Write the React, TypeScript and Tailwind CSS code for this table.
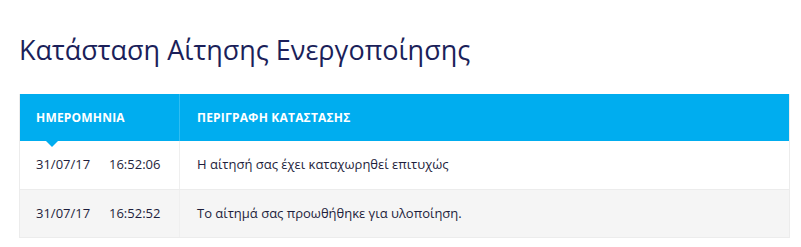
const rows = [
  { date: "31/07/17", time: "16:52:06", text: "Η αίτησή σας έχει καταχωρηθεί επιτυχώς" },
  { date: "31/07/17", time: "16:52:52", text: "Το αίτημά σας προωθήθηκε για υλοποίηση." },
];

export default function App() {
  return (
    <div className="w-[801px] h-[247px] bg-white font-['Open_Sans',sans-serif] pl-[19px] pr-[11px] pt-[30px]">
      {/* Title */}
      <h1 className="text-[27px] leading-[40px] text-[#1b1f5a] font-normal">Κατάσταση Αίτησης Ενεργοποίησης</h1>

      {/* Status table */}
      <div className="mt-[24px] border border-[#ececec] border-t-0">
        <div className="flex h-[47px] bg-[#00adef] text-white text-[12px] font-bold uppercase tracking-[0.2px]">
          <div className="relative w-[160px] flex items-center pl-[16px] border-r border-[#2fbdf2]">
            ΗΜΕΡΟΜΗΝΙΑ
            <span className="absolute left-[26px] -bottom-[6px] w-0 h-0 border-l-[6px] border-r-[6px] border-t-[6px] border-l-transparent border-r-transparent border-t-[#00adef]" />
          </div>
          <div className="flex-1 flex items-center pl-[17px]">ΠΕΡΙΓΡΑΦΗ ΚΑΤΑΣΤΑΣΗΣ</div>
        </div>
        {rows.map((r, i) => (
          <div
            key={i}
            className={`flex h-[48px] text-[13px] text-[#1e1e3c] ${i === 1 ? "bg-[#f5f5f5] border-t border-[#ececec]" : "bg-white"}`}
          >
            <div className="w-[160px] flex items-center pl-[16px] border-r border-[#efefef]">
              <span className="w-[73px]">{r.date}</span>
              <span>{r.time}</span>
            </div>
            <div className="flex-1 flex items-center pl-[17px]">{r.text}</div>
          </div>
        ))}
      </div>
    </div>
  );
}
